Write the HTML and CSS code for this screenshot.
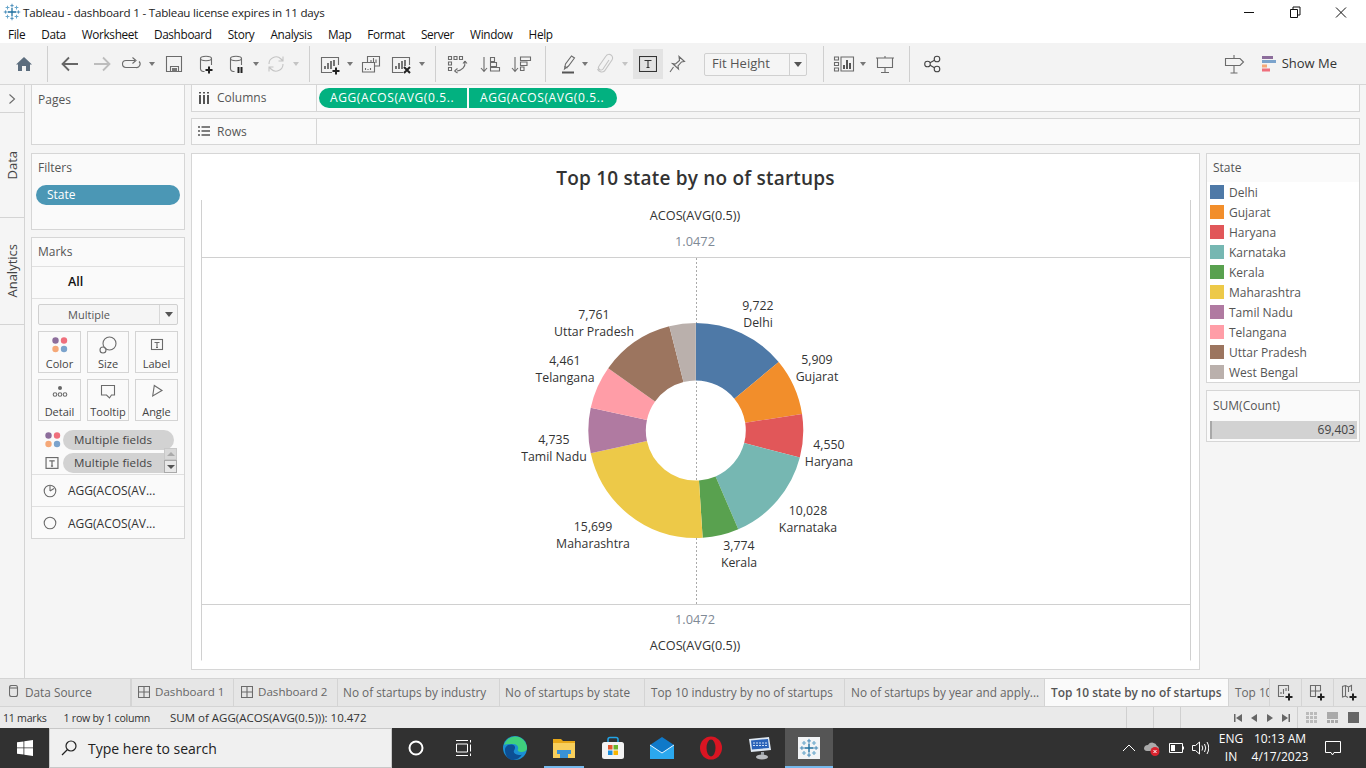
FILE: index.html
```html
<!DOCTYPE html>
<html lang="en">
<head>
<meta charset="utf-8">
<title>Tableau - dashboard 1</title>
<link rel="stylesheet" href="styles.css">
</head>
<body>
<svg class="defs" width="0" height="0" aria-hidden="true">
  <defs>
    <g id="snow">
      <path d="M12 6.500v11M6.500 12h11" class="sn1"/>
      <path d="M6 3.500v5M3.500 6h5M18 3.500v5M15.500 6h5M6 15.500v5M3.500 18h5M18 15.500v5M15.500 18h5" class="sn2"/>
      <path d="M12 1v5M9.800 3.500h4.400M12 18v5M9.800 20.500h4.400M1 12h5M3.500 9.800v4.400M18 12h5M20.500 9.800v4.400" class="sn3"/>
    </g>
    <g id="dots">
      <circle cx="4.500" cy="4.500" r="3.200" fill="#8c6d9b"/><circle cx="13" cy="4.500" r="3.200" fill="#ef6f7c"/>
      <circle cx="4.500" cy="13" r="3.200" fill="#f5a878"/><circle cx="13" cy="13" r="3.200" fill="#7ba3cc"/>
    </g>
    <g id="tbox"><rect x=".5" y=".5" width="11" height="10" class="ic"/><path d="M3.500 3.500h5M6 3.500v5M5 8.500h2" class="ic"/></g>
    <g id="cyl"><ellipse cx="12" cy="6.500" rx="5.500" ry="2.200" class="ic"/><path d="M6.500 6.500V17a3 3 0 0 0 3 2.500h1M17.500 6.500V13" class="ic"/></g>
    <g id="chartbox"><path d="M13 20.500H2.500v-15h17V13" class="ic"/><path d="M6 17v-3M9 17v-6M12 17V9M15 14V8" class="ic2"/></g>
  </defs>
</svg>
<div class="app">
  <header class="titlebar">
    <svg class="tb-logo" width="18" height="18" viewBox="0 0 24 24"><use href="#snow"/></svg>
    <span class="tb-title">Tableau - dashboard 1 - Tableau license expires in 11 days</span>
    <div class="winctl">
      <svg width="46" height="20" viewBox="0 0 46 20"><path d="M18 10.500h10" class="win"/></svg>
      <svg width="46" height="20" viewBox="0 0 46 20"><path d="M18.500 7.500h7v8h-7zM21 7.500v-2.500h7v8h-2.500" class="win"/></svg>
      <svg width="46" height="20" viewBox="0 0 46 20"><path d="M18 5.500l10 10M28 5.500l-10 10" class="win"/></svg>
    </div>
  </header>
  <nav class="menubar">
    <span>File</span><span>Data</span><span>Worksheet</span><span>Dashboard</span><span>Story</span><span>Analysis</span><span>Map</span><span>Format</span><span>Server</span><span>Window</span><span>Help</span>
  </nav>
  <div class="toolbar">
    <svg class="i ml12" viewBox="0 0 24 24"><path d="M12 5l8 7.500h-2V19h-4v-5h-4v5H6v-6.500H4z" fill="#5c6d7e"/></svg>
    <i class="sep ml11"></i>
    <svg class="i ml10" viewBox="0 0 24 24"><path d="M20 12H5M11 5.500L4.500 12l6.500 6.500" class="arrow"/></svg>
    <svg class="i ml8" viewBox="0 0 24 24"><path d="M4 12h15M13 5.500l6.500 6.500-6.500 6.500" class="arrow lite"/></svg>
    <svg class="i ml5" viewBox="0 0 24 24"><path d="M16 8.500H7a3.500 3.500 0 0 0 0 7h10a3.500 3.500 0 0 0 3-6M13.500 5.500L17 8.500l-3.500 3" class="ic"/></svg>
    <b class="caret ml4"></b>
    <svg class="i ml5" viewBox="0 0 24 24"><path d="M4.500 4.500h15v15h-15zM8.500 19.500v-5h8v5" class="ic"/><rect x="10" y="16" width="5" height="3.500" fill="#777"/></svg>
    <svg class="i ml8" viewBox="0 0 24 24"><use href="#cyl"/><path d="M15 14.500v7M11.500 18h7" class="blk"/></svg>
    <svg class="i ml6" viewBox="0 0 24 24"><use href="#cyl"/><path d="M14.500 15v6M17.500 15v6" class="blk"/></svg>
    <b class="caret ml3"></b>
    <svg class="i ml3" viewBox="0 0 24 24"><path d="M5 12a7 7 0 0 1 12-5l1.500 1.500M19 12a7 7 0 0 1-12 5l-1.500-1.500M19 4.500v4.500h-4.500M5 19.500V15h4.500" class="ic lite2"/></svg>
    <b class="caret lt ml3"></b>
    <i class="sep ml8"></i>
    <svg class="i ml9" viewBox="0 0 24 24"><use href="#chartbox"/><path d="M17 15.500v7M13.500 19h7" class="blk"/></svg>
    <b class="caret ml2"></b>
    <svg class="i ml4" viewBox="0 0 24 24"><path d="M8.500 10V4.500h12V14H16" class="ic"/><path d="M3.500 10.500h12V20h-12z" class="ic"/><path d="M12 11V8M14.500 11V6M17 11V7.500M6.500 18v-2M9 18v-1M11.500 18v-2" class="ic"/></svg>
    <svg class="i ml7" viewBox="0 0 24 24"><use href="#chartbox"/><path d="M14 15l6 6M20 15l-6 6" class="blk"/></svg>
    <b class="caret ml3"></b>
    <i class="sep ml8"></i>
    <svg class="i ml9" viewBox="0 0 24 24"><path d="M3.500 4.500h3v3h-3zM9 4.500h3v3H9zM14.500 4.500h3v3h-3zM3.500 10h3v3h-3zM3.500 15.500h3v3h-3z" class="ic"/><path d="M20 10c.5 5-3 8.500-8 9M9.500 19l3-2.500M9.500 19l3 2M20 9l-2 2.500M20 9l2 2.500" class="ic"/></svg>
    <svg class="i ml9" viewBox="0 0 24 24"><path d="M6 5v14M3 16l3 3.500L9 16" class="ic"/><path d="M12.500 5.500h4v4h-4zM12.500 10.500h6v4h-6zM12.500 15.500h9v3.500h-9z" class="ic"/></svg>
    <svg class="i ml7" viewBox="0 0 24 24"><path d="M6 5v14M3 16l3 3.500L9 16" class="ic"/><path d="M11.500 5h10v3.500h-10zM11.500 10h6.500v3.500h-6.500zM11.500 15h3.500v3.500h-3.500z" class="ic"/></svg>
    <i class="sep ml12"></i>
    <svg class="i ml10" viewBox="0 0 24 24"><path d="M8.500 17l1-5 6-8 3 2-6 8z" class="ic"/><path d="M8.500 14.500l3 1.500" class="ic"/><path d="M6 20.500h12" class="hl"/></svg>
    <b class="caret"></b>
    <svg class="i ml3" viewBox="0 0 24 24"><path d="M16 8l-6 9a2.500 2.500 0 0 1-4-3l7-10a3.500 3.500 0 0 1 6 4l-7.500 11a4.500 4.500 0 0 1-7-2" class="ic lite2"/></svg>
    <b class="caret lt ml3"></b>
    <div class="tbtn ml3"><svg width="18" height="16" viewBox="0 0 18 16"><rect x=".5" y=".5" width="17" height="15" class="dk"/><path d="M5.500 4.500h7M9 4.500v7M7.500 11.500h3" class="dk"/></svg></div>
    <svg class="i ml2" viewBox="0 0 24 24"><path d="M14 4.500l5.500 5-3 .5-3.500 4 .5 3-6-5.500 3 .5 4-3.500zM8.500 15l-3.500 5" class="ic"/></svg>
    <div class="fit ml15"><span class="fit-t">Fit Height</span><span class="fit-c"><b class="caret dk2"></b></span></div>
    <i class="sep ml16"></i>
    <svg class="i ml9" viewBox="0 0 24 24"><path d="M1.500 5h4v3h-4zM1.500 10.500h4v3h-4zM1.500 16h4v3h-4zM8 5h12.500v14H8z" class="ic"/><path d="M11 17v-4M14 17V8M17 17v-6" class="ic3"/></svg>
    <b class="caret ml1"></b>
    <svg class="i ml5" viewBox="0 0 24 24"><path d="M3 6h18M4.500 6v9.500h15V6M12 15.500V20M8 20.500h8M12 4v2" class="ic"/></svg>
    <i class="sep ml12"></i>
    <svg class="i ml10" viewBox="0 0 24 24"><circle cx="7.500" cy="12" r="2.800" class="icd"/><circle cx="17" cy="7" r="2.800" class="icd"/><circle cx="17" cy="17" r="2.800" class="icd"/><path d="M10 10.700l4.500-2.400M10 13.300l4.500 2.400" class="icd"/></svg>
    <div class="tb-right">
      <svg class="i" viewBox="0 0 24 24"><path d="M3.500 6.500H18l3.500 3.500-3.500 3.500H3.500zM12 3v3.500M12 13.500V21M8.500 21h7" class="ic"/></svg>
      <svg class="showme-ic" width="14" height="16" viewBox="0 0 14 16"><rect width="11" height="3" fill="#8c6d9b"/><rect y="4" width="14" height="3" fill="#7ba3cc"/><rect y="8.500" width="5" height="3" fill="#f5a878"/><rect y="12.500" width="8" height="3" fill="#ef6f7c"/></svg>
      <span class="showme">Show Me</span>
    </div>
  </div>

  <main class="main">
    <aside class="strip">
      <div class="st-chev"><svg width="8" height="12" viewBox="0 0 8 12"><path d="M1.500 1.500L6.500 6l-5 4.500" class="ic"/></svg></div>
      <div class="st-tab st-data"><span>Data</span></div>
      <div class="st-tab st-an"><span>Analytics</span></div>
    </aside>

    <section class="leftcol">
      <div class="panel pages"><div class="ph">Pages</div></div>
      <div class="panel filters"><div class="ph">Filters</div><div class="fpill">State</div></div>
      <div class="panel marks">
        <div class="ph mh">Marks</div>
        <div class="m-all">All</div>
        <div class="m-body">
          <div class="m-select"><span class="m-st">Multiple</span><span class="m-sc"><b class="caret dk2"></b></span></div>
          <div class="m-cards">
            <div class="card"><svg width="18" height="18" viewBox="0 0 18 18"><use href="#dots"/></svg><span>Color</span></div>
            <div class="card"><svg width="18" height="18" viewBox="0 0 18 18"><circle cx="10.500" cy="7.500" r="6.500" class="ic"/><circle cx="4" cy="14" r="3" class="ic"/></svg><span>Size</span></div>
            <div class="card"><svg width="18" height="18" viewBox="-3 -3 18 18"><use href="#tbox"/></svg><span>Label</span></div>
            <div class="card"><svg width="18" height="18" viewBox="0 0 18 18"><circle cx="9" cy="4" r="2" fill="#666"/><circle cx="4" cy="10.500" r="1.800" class="ic"/><circle cx="9" cy="10.500" r="1.800" class="ic"/><circle cx="14" cy="10.500" r="1.800" class="ic"/></svg><span>Detail</span></div>
            <div class="card"><svg width="18" height="18" viewBox="0 0 18 18"><path d="M2.500 1.500h13v9.500h-3l-2 3-3-3h-5z" class="ic"/></svg><span>Tooltip</span></div>
            <div class="card"><svg width="18" height="18" viewBox="0 0 18 18"><path d="M6.300 1.500L14 6.500 4.700 12z" class="ic"/></svg><span>Angle</span></div>
          </div>
          <div class="m-fields">
            <div class="m-field"><svg width="18" height="18" viewBox="0 0 18 18"><use href="#dots"/></svg><span class="gpill">Multiple fields</span></div>
            <div class="m-field"><svg width="14" height="13" viewBox="0 0 12 12"><use href="#tbox"/></svg><span class="gpill gp2">Multiple fields</span></div>
            <div class="m-scroll"><span class="sb"><b class="up"></b></span><span class="sb sb2"><b class="down"></b></span></div>
          </div>
        </div>
        <div class="m-row"><svg width="14" height="14" viewBox="0 0 14 14"><circle cx="7" cy="7" r="5.800" class="ic"/><path d="M7 7V1.200M7 7l4-2.500" class="ic"/></svg><span>AGG(ACOS(AV...</span></div>
        <div class="m-row"><svg width="14" height="14" viewBox="0 0 14 14"><circle cx="7" cy="7" r="5.800" class="ic"/></svg><span>AGG(ACOS(AV...</span></div>
      </div>
    </section>

    <section class="centercol">
      <div class="shelf sh-col">
        <div class="sh-label"><svg width="12" height="12" viewBox="0 0 12 12"><path d="M2 3v9M6 3v9M10 3v9" class="bars"/><path d="M2 0v1.500M6 0v1.500M10 0v1.500" class="bars"/></svg><span>Columns</span></div>
        <div class="sh-pills"><span class="gr gr1">AGG(ACOS(AVG(0.5..</span><span class="gr gr2">AGG(ACOS(AVG(0.5..</span></div>
      </div>
      <div class="shelf sh-row">
        <div class="sh-label"><svg width="12" height="12" viewBox="0 0 12 12"><path d="M0 2h2M3.500 2H12M0 6h2M3.500 6H12M0 10h2M3.500 10H12" class="bars2"/></svg><span>Rows</span></div>
      </div>
      <div class="content">
        <div class="view">
          <h1 class="vtitle">Top 10 state by no of startups</h1>
          <svg class="plot" width="1009" height="470" viewBox="191 200 1009 470">
            <path d="M201.500 200V660.500M1190.500 200V660.500" class="axis"/>
            <path d="M201 257.500H1191M201 604.500H1191" class="axis"/>
            <path d="M696.500 258V604" class="zero"/>
            <text x="695" y="220" class="t-axis">ACOS(AVG(0.5))</text>
            <text x="695" y="246" class="t-tick">1.0472</text>
            <text x="695" y="624" class="t-tick">1.0472</text>
            <text x="695" y="650" class="t-axis">ACOS(AVG(0.5))</text>
            <g transform="rotate(-90 695.800 430.500)" fill="none" stroke-width="57.500">
              <circle cx="695.800" cy="430.500" r="78.750" pathLength="69403" stroke="#4e79a7" stroke-dasharray="9722 69403"/>
              <circle cx="695.800" cy="430.500" r="78.750" pathLength="69403" stroke="#f28e2b" stroke-dasharray="5909 69403" stroke-dashoffset="-9722"/>
              <circle cx="695.800" cy="430.500" r="78.750" pathLength="69403" stroke="#e15759" stroke-dasharray="4550 69403" stroke-dashoffset="-15631"/>
              <circle cx="695.800" cy="430.500" r="78.750" pathLength="69403" stroke="#76b7b2" stroke-dasharray="10028 69403" stroke-dashoffset="-20181"/>
              <circle cx="695.800" cy="430.500" r="78.750" pathLength="69403" stroke="#59a14f" stroke-dasharray="3774 69403" stroke-dashoffset="-30209"/>
              <circle cx="695.800" cy="430.500" r="78.750" pathLength="69403" stroke="#edc948" stroke-dasharray="15699 69403" stroke-dashoffset="-33983"/>
              <circle cx="695.800" cy="430.500" r="78.750" pathLength="69403" stroke="#b07aa1" stroke-dasharray="4735 69403" stroke-dashoffset="-49682"/>
              <circle cx="695.800" cy="430.500" r="78.750" pathLength="69403" stroke="#ff9da7" stroke-dasharray="4461 69403" stroke-dashoffset="-54417"/>
              <circle cx="695.800" cy="430.500" r="78.750" pathLength="69403" stroke="#9c755f" stroke-dasharray="7761 69403" stroke-dashoffset="-58878"/>
              <circle cx="695.800" cy="430.500" r="78.750" pathLength="69403" stroke="#bab0ac" stroke-dasharray="2764 69403" stroke-dashoffset="-66639"/>
            </g>
            <text x="758" y="310" class="t-l">9,722</text><text x="758" y="327" class="t-l">Delhi</text>
            <text x="817" y="364" class="t-l">5,909</text><text x="817" y="381" class="t-l">Gujarat</text>
            <text x="829" y="449" class="t-l">4,550</text><text x="829" y="466" class="t-l">Haryana</text>
            <text x="808" y="515" class="t-l">10,028</text><text x="808" y="532" class="t-l">Karnataka</text>
            <text x="739" y="550" class="t-l">3,774</text><text x="739" y="567" class="t-l">Kerala</text>
            <text x="593" y="531" class="t-l">15,699</text><text x="593" y="548" class="t-l">Maharashtra</text>
            <text x="554" y="444" class="t-l">4,735</text><text x="554" y="461" class="t-l">Tamil Nadu</text>
            <text x="565" y="365" class="t-l">4,461</text><text x="565" y="382" class="t-l">Telangana</text>
            <text x="594" y="319" class="t-l">7,761</text><text x="594" y="336" class="t-l">Uttar Pradesh</text>
          </svg>
        </div>
        <aside class="rightcol">
          <div class="panel legend">
            <div class="ph lh">State</div>
            <ul class="lg-list">
              <li><i class="sw c1"></i>Delhi</li>
              <li><i class="sw c2"></i>Gujarat</li>
              <li><i class="sw c3"></i>Haryana</li>
              <li><i class="sw c4"></i>Karnataka</li>
              <li><i class="sw c5"></i>Kerala</li>
              <li><i class="sw c6"></i>Maharashtra</li>
              <li><i class="sw c7"></i>Tamil Nadu</li>
              <li><i class="sw c8"></i>Telangana</li>
              <li><i class="sw c9"></i>Uttar Pradesh</li>
              <li><i class="sw c10"></i>West Bengal</li>
            </ul>
          </div>
          <div class="panel sumcount">
            <div class="ph sh">SUM(Count)</div>
            <div class="sumbar">69,403</div>
          </div>
        </aside>
      </div>
    </section>
  </main>

  <div class="tabs">
    <div class="tab t-ds"><svg width="10" height="13" viewBox="0 0 10 13"><rect x=".5" y=".5" width="8" height="11" rx="2" class="ic"/><path d="M.5 3h8" class="ic"/></svg>Data Source</div>
    <div class="tab t-d1"><svg width="12" height="12" viewBox="0 0 12 12"><path d="M.5.500h11v11H.500zM6 .500v11M.500 6h11" class="ic"/></svg>Dashboard 1</div>
    <div class="tab t-d2"><svg width="12" height="12" viewBox="0 0 12 12"><path d="M.5.500h11v11H.500zM6 .500v11M.500 6h11" class="ic"/></svg>Dashboard 2</div>
    <div class="tab t-a">No of startups by industry</div>
    <div class="tab t-b">No of startups by state</div>
    <div class="tab t-c">Top 10 industry by no of startups</div>
    <div class="tab t-e">No of startups by year and apply...</div>
    <div class="tab t-active">Top 10 state by no of startups</div>
    <div class="tab t-clip">Top 10</div>
    <div class="tab t-add"><svg width="18" height="18" viewBox="0 0 18 18"><path d="M7 12.500H1.500v-11h10V7M4 10V8M6.500 10V5M9 7V4" class="ic"/><path d="M12 9.500v7M8.500 13h7" class="blk"/></svg></div>
    <div class="tab t-add"><svg width="18" height="18" viewBox="0 0 18 18"><path d="M7 12.500H1.500v-11h10V7M1.500 7h10M6.500 1.500v11" class="ic"/><path d="M12 9.500v7M8.500 13h7" class="blk"/></svg></div>
    <div class="tab t-add"><svg width="18" height="18" viewBox="0 0 18 18"><path d="M7 13.500l-2.500-1.500-3 1V2.500l3-1 3 1.500 3-1.500V7M4.500 1.500V12M7.500 3v5" class="ic"/><path d="M12 9.500v7M8.500 13h7" class="blk"/></svg></div>
  </div>

  <div class="status">
    <span class="s1">11 marks</span><span class="s2">1 row by 1 column</span><span class="s3">SUM of AGG(ACOS(AVG(0.5))): 10.472</span>
    <div class="s-cells"><i></i><i></i><i></i></div>
    <div class="s-nav">
      <svg width="8" height="8" viewBox="0 0 8 8"><path d="M0 0h1.500v8H0zM8 0v8L2 4z" fill="#666"/></svg>
      <svg width="8" height="8" viewBox="0 0 8 8"><path d="M7 0v8L1 4z" fill="#666"/></svg>
      <svg width="8" height="8" viewBox="0 0 8 8"><path d="M1 0v8l6-4z" fill="#666"/></svg>
      <svg width="8" height="8" viewBox="0 0 8 8"><path d="M8 0H6.500v8H8zM0 0v8l6-4z" fill="#666"/></svg>
    </div>
    <div class="s-view">
      <svg width="11" height="11" viewBox="0 0 11 11"><path d="M0 0h3v3H0zM4 0h3v3H4zM8 0h3v3H8zM0 4h3v3H0zM4 4h3v3H4zM8 4h3v3H8zM0 8h3v3H0zM4 8h3v3H4zM8 8h3v3H8z" fill="#bbb"/></svg>
      <svg width="11" height="11" viewBox="0 0 11 11"><path d="M0 0h11v7H0zM0 8h3v3H0zM4 8h3v3H4zM8 8h3v3H8z" fill="#aaa"/></svg>
      <svg width="11" height="11" viewBox="0 0 11 11"><path d="M0 0h11v11H0z" fill="#666"/></svg>
    </div>
  </div>

  <footer class="taskbar">
    <div class="start"><svg width="16" height="16" viewBox="0 0 16 16"><path d="M0 2.300l6.500-.9V7.500H0zM7.300 1.300L16 0v7.500H7.300zM0 8.300h6.500v6.300L0 13.700zM7.300 8.300H16V16l-8.700-1.200z" fill="#fff"/></svg></div>
    <div class="search"><svg width="16" height="16" viewBox="0 0 16 16"><circle cx="10" cy="6" r="5" class="srch"/><path d="M6.500 9.500L1 15" class="srch"/></svg><span>Type here to search</span></div>
    <div class="tk"><svg width="16" height="16" viewBox="0 0 16 16"><circle cx="8" cy="8" r="6.500" fill="none" stroke="#fff" stroke-width="2"/></svg></div>
    <div class="tk"><svg width="18" height="16" viewBox="0 0 18 16"><path d="M1 .500h12M1 15.500h12M1.500 4h11v8h-11z" class="wl"/><path d="M15.500 0v2.500M15.500 4.500v7M15.500 13.500V16" class="wl"/></svg></div>
    <div class="tk ml-tk"><svg width="24" height="24" viewBox="0 0 24 24"><circle cx="12" cy="12" r="12" fill="#1b8fd4"/><path d="M1 9C3 2 10-1 16 1c5 2 8 7 8 11 0 3-3 4-6 4-2 0-4-1-3-3 1-2-1-5-5-5-4 0-7 0-9 1z" fill="#3fd07d"/><path d="M2 14c0-4 4-6 7-5.500 3 .5 4 3 2 6-1 2 1 4 5 4.500 1 .2 2 0 3-.5-2 3-5 5.500-9 5.500-5 0-8-5-8-10z" fill="#0c4f94"/></svg></div>
    <div class="tk on"><svg width="22" height="20" viewBox="0 0 22 20"><path d="M0 1h8l2 2h12v5H0z" fill="#e8a818"/><path d="M0 5h22v15H0z" fill="#f8cf5c"/><path d="M4 12h14v4H15v4H7v-4H4z" fill="#3a92d6"/></svg></div>
    <div class="tk"><svg width="24" height="24" viewBox="0 0 24 24"><path d="M7 7V3.500a2 2 0 0 1 2-2h6a2 2 0 0 1 2 2V7" fill="none" stroke="#22a5e8" stroke-width="1.500"/><rect x="1" y="6" width="22" height="17" rx="2.500" fill="#f3f3f3"/><rect x="7" y="9" width="4.500" height="4.500" fill="#e4572e"/><rect x="12.500" y="9" width="4.500" height="4.500" fill="#6bb42c"/><rect x="7" y="14.500" width="4.500" height="4.500" fill="#1a8fe0"/><rect x="12.500" y="14.500" width="4.500" height="4.500" fill="#f7b500"/></svg></div>
    <div class="tk"><svg width="24" height="24" viewBox="0 0 24 24"><path d="M0 9L12 1l12 8v14H0z" fill="#0f79c9"/><path d="M0 9l12 8 12-8v14H0z" fill="#2ba8ee"/><path d="M0 9l12 8 12-8" fill="none" stroke="#eaf6ff" stroke-width="1"/></svg></div>
    <div class="tk"><svg width="24" height="24" viewBox="0 0 24 24"><ellipse cx="12" cy="12" rx="11" ry="11.500" fill="#d91522"/><ellipse cx="12" cy="12" rx="4.500" ry="8.500" fill="#2f2f2f"/></svg></div>
    <div class="tk"><svg width="24" height="24" viewBox="0 0 24 24"><path d="M1 3l20-2 2 13-20 2z" fill="#dfe8f2"/><path d="M3 4.500l17-1.500 1 9-17 1.500z" fill="#2a62b8"/><path d="M5 7h14M5 9.500h14" stroke="#cfe0f5" stroke-dasharray="2 1"/><ellipse cx="14" cy="21" rx="6" ry="2.500" fill="#b9bcc0"/><path d="M13 16h3v3h-3z" fill="#9aa0a6"/></svg></div>
    <div class="tk tk-tb"><svg width="22" height="22" viewBox="0 0 22 22"><rect width="22" height="22" fill="#f2f4f6"/><svg x="1" y="1" width="20" height="20" viewBox="0 0 24 24"><use href="#snow"/></svg></svg></div>
    <div class="tray">
      <svg width="14" height="8" viewBox="0 0 14 8"><path d="M1 7l6-6 6 6" class="wl"/></svg>
      <svg class="t-cloud" width="18" height="16" viewBox="0 0 18 16"><path d="M1 9a4 4 0 0 1 4-4 5 5 0 0 1 9 1 3 3 0 0 1 1 5H4a3 3 0 0 1-3-2z" fill="#aaa"/><circle cx="12" cy="11.500" r="4.500" fill="#d9232e"/><path d="M10.500 10l3 3M13.500 10l-3 3" stroke="#fff"/></svg>
      <svg class="t-bat" width="16" height="10" viewBox="0 0 16 10"><path d="M.5.500h13v9H.500z" class="wl"/><rect x="2" y="2" width="4" height="6" fill="#fff"/><path d="M14.500 3.500v3" class="wl"/></svg>
      <svg class="t-vol" width="17" height="14" viewBox="0 0 17 14"><path d="M.5 4.500h3l4-3.500v12l-4-3.500h-3zM10 4.500q1.500 2.500 0 5M12.500 3q2.500 4 0 8M15 1q3.500 6 0 12" class="wl"/></svg>
      <div class="t-lang"><span>ENG</span><span>IN</span></div>
      <div class="t-clock"><span>10:13 AM</span><span>4/17/2023</span></div>
      <svg class="t-note" width="16" height="15" viewBox="0 0 16 15"><path d="M.5.500h15v11H9l-1.500 2.500L6 11.500H.5z" class="wl"/></svg>
    </div>
  </footer>
</div>
</body>
</html>
```
FILE: styles.css
```css
* { box-sizing: border-box; }
html, body { margin: 0; padding: 0; }
body { font-family: "Open Sans", "Noto Sans", sans-serif; font-size: 12px; color: #333; background: #fff; overflow: hidden; }
.defs { position: absolute; }
.app { width: 1366px; height: 768px; display: flex; flex-direction: column; overflow: hidden; }
i, b { display: block; font-style: normal; }

.sn1 { stroke: #1f6f9f; stroke-width: 1.7; fill: none; }
.sn2 { stroke: #6aa8cc; stroke-width: 1.4; fill: none; }
.sn3 { stroke: #3f86b5; stroke-width: 1.2; fill: none; }
.ic { fill: none; stroke: #6b6b6b; stroke-width: 1.1; }
.icd { fill: none; stroke: #444; stroke-width: 1.1; }
.ic2 { fill: none; stroke: #555; stroke-width: 1.6; }
.ic3 { fill: none; stroke: #555; stroke-width: 2; }
.lite2 { stroke: #c4c4c4; }
.blk { fill: none; stroke: #222; stroke-width: 2; }
.arrow { fill: none; stroke: #666; stroke-width: 1.8; }
.arrow.lite { stroke: #bdbdbd; }
.hl { stroke: #555; stroke-width: 2; fill: none; }
.dk { fill: none; stroke: #333; stroke-width: 1.1; }
.win { fill: none; stroke: #111; stroke-width: 1; }

.titlebar { height: 24px; display: flex; align-items: center; background: #fff; padding-left: 3px; }
.tb-logo { flex: none; }
.tb-title { margin-left: 2px; font-size: 11.6px; letter-spacing: -.2px; color: #222; }
.winctl { margin-left: auto; display: flex; gap: 0; margin-right: 2px; }

.menubar { height: 19px; display: flex; padding-left: 8px; gap: 16px; align-items: center; font-size: 11.8px; letter-spacing: -.35px; color: #111; background: #fff; }

.toolbar { height: 41px; flex: none; background: #f3f3f3; display: flex; align-items: center; padding-top: 1px; }
.i { width: 24px; height: 24px; flex: none; }
.sep { width: 1px; height: 36px; background: #cfcfcf; flex: none; }
.caret { width: 0; height: 0; border-left: 3px solid transparent; border-right: 3px solid transparent; border-top: 4px solid #777; margin-right: 2px; flex: none; box-sizing: content-box; }
.toolbar > .caret { margin-left: 2px; }
.toolbar > .caret.ml1 { margin-left: 3px; }
.toolbar > .caret.ml2 { margin-left: 4px; }
.toolbar > .caret.ml3 { margin-left: 5px; }
.toolbar > .caret.ml4 { margin-left: 6px; }
.caret.lt { border-top-color: #c4c4c4; }
.caret.dk2 { border-top-color: #555; border-left-width: 4px; border-right-width: 4px; border-top-width: 5px; margin: 0; }
.ml1 { margin-left: 1px; } .ml2 { margin-left: 2px; } .ml3 { margin-left: 3px; } .ml4 { margin-left: 4px; }
.ml5 { margin-left: 5px; } .ml6 { margin-left: 6px; } .ml7 { margin-left: 7px; } .ml8 { margin-left: 8px; }
.ml9 { margin-left: 9px; } .ml10 { margin-left: 10px; } .ml11 { margin-left: 11px; } .ml12 { margin-left: 12px; }
.ml15 { margin-left: 15px; } .ml16 { margin-left: 16px; }
.tbtn { width: 30px; height: 30px; background: #e3e3e3; display: flex; align-items: center; justify-content: center; flex: none; }
.fit { width: 103px; height: 23px; flex: none; border: 1px solid #d0d0d0; border-radius: 2px; background: #f5f5f5; display: flex; align-items: center; }
.fit-t { width: 84px; padding: 0 0 2px 7px; font-size: 13px; color: #555; white-space: nowrap; }
.fit-c { flex: 1; height: 100%; border-left: 1px solid #d0d0d0; display: flex; align-items: center; justify-content: center; }
.tb-right { margin-left: auto; display: flex; align-items: center; padding-right: 29px; }
.showme-ic { margin-left: 16px; }
.showme { margin-left: 6px; padding-bottom: 2px; font-size: 13px; color: #333; }

.main { flex: 1; min-height: 0; display: flex; background: #f5f5f5; border-top: 1px solid #d6d6d6; }
.strip { width: 25px; flex: none; border-right: 1px solid #d4d4d4; background: #f5f5f5; display: flex; flex-direction: column; }
.st-chev { height: 28px; border-bottom: 1px solid #d4d4d4; display: flex; align-items: center; justify-content: center; }
.st-tab { display: flex; align-items: center; justify-content: center; border-bottom: 1px solid #d4d4d4; font-size: 13px; color: #444; }
.st-tab span { writing-mode: vertical-rl; transform: rotate(180deg); }
.st-data { height: 105px; }
.st-an { height: 107px; }

.panel { background: #fafafa; border: 1px solid #d6d6d6; }
.leftcol { width: 154px; margin-left: 6px; flex: none; display: flex; flex-direction: column; }
.ph { color: #555; font-size: 12px; padding-left: 6px; }
.pages { height: 60px; border-top: 0; }
.pages .ph { padding-top: 6px; }
.filters { height: 77px; margin-top: 8px; }
.filters .ph { padding-top: 5px; height: 31px; }
.fpill { margin: 0 4px; height: 20px; border-radius: 10px; background: #4b97b5; color: #fff; padding-left: 11px; font-size: 12px; line-height: 19px; }
.marks { height: 302px; margin-top: 7px; }
.mh { height: 29px; padding-top: 5px; border-bottom: 1px solid #e0e0e0; }
.m-all { height: 32px; line-height: 29px; border-bottom: 1px solid #e0e0e0; font-weight: 600; font-size: 12.5px; color: #111; padding-left: 36px; }
.m-body { height: 176px; padding: 5px 6px 0; border-bottom: 1px solid #e0e0e0; }
.m-select { height: 21px; border: 1px solid #d0d0d0; border-radius: 2px; background: #f5f5f5; display: flex; align-items: center; font-size: 11px; color: #555; }
.m-st { width: 120px; text-align: center; padding-right: 20px; }
.m-sc { flex: 1; height: 100%; border-left: 1px solid #d8d8d8; display: flex; align-items: center; justify-content: center; }
.m-cards { display: grid; grid-template-columns: 43px 42px 43px; column-gap: 6px; row-gap: 6px; margin-top: 6px; }
.card { height: 42px; border: 1px solid #d4d4d4; display: flex; flex-direction: column; align-items: center; justify-content: flex-end; font-size: 11px; color: #444; padding-bottom: 1px; line-height: 15px; }
.card svg { margin-bottom: 2px; }
.m-fields { position: relative; margin-top: 9px; height: 43px; overflow: hidden; }
.m-field { display: flex; align-items: center; height: 20px; margin-bottom: 3px; }
.m-field svg { margin-left: 6px; width: 18px; flex: none; }
.m-field svg[width="14"] { width: 14px; margin-left: 7px; margin-right: 3px; }
.gpill { margin-left: 1px; width: 111px; height: 20px; border-radius: 10px; background: #d2d2d2; font-size: 11.6px; font-weight: 500; letter-spacing: .15px; color: #444; padding-left: 11px; line-height: 19px; white-space: nowrap; }
.m-scroll { position: absolute; right: 1px; top: 18px; width: 13px; height: 25px; display: flex; flex-direction: column; }
.sb { height: 12px; background: #d8d8d8; border: 1px solid #c8c8c8; display: flex; align-items: center; justify-content: center; }
.sb2 { height: 13px; background: #e8e8e8; border-color: #aaa; }
.up { width: 0; height: 0; border-left: 4px solid transparent; border-right: 4px solid transparent; border-bottom: 4px solid #aaa; }
.down { width: 0; height: 0; border-left: 4px solid transparent; border-right: 4px solid transparent; border-top: 4px solid #555; }
.m-row { height: 32px; display: flex; align-items: center; padding-left: 11px; font-size: 12px; color: #333; border-bottom: 1px solid #e0e0e0; gap: 11px; }
.m-row:last-child { border-bottom: 0; }

.centercol { width: 1169px; margin-left: 6px; flex: none; display: flex; flex-direction: column; }
.shelf { background: #fafafa; border: 1px solid #d6d6d6; display: flex; }
.sh-col { height: 27px; border-top: 0; }
.sh-row { height: 27px; margin-top: 6px; }
.sh-label { width: 125px; flex: none; border-right: 1px solid #d6d6d6; display: flex; align-items: center; gap: 7px; padding-left: 6px; color: #555; font-size: 12px; padding-bottom: 1px; }
.bars { fill: none; stroke: #555; stroke-width: 2; }
.bars2 { fill: none; stroke: #555; stroke-width: 1.6; }
.sh-pills { display: flex; gap: 2px; padding: 3px 0 0 2px; }
.gr { width: 148px; height: 20px; background: #02b180; color: #fff; font-size: 12px; letter-spacing: .6px; line-height: 19px; padding-left: 11px; white-space: nowrap; }
.gr1 { border-radius: 10px 0 0 10px; }
.gr2 { border-radius: 0 10px 10px 0; }
.content { display: flex; margin-top: 8px; }
.view { width: 1009px; height: 517px; background: #fff; border: 1px solid #d6d6d6; display: flex; flex-direction: column; align-items: center; }
.vtitle { margin: 0; height: 46px; flex: none; line-height: 49px; font-size: 19px; letter-spacing: .2px; font-weight: 600; color: #333; }
.plot { flex: none; margin: 0 -1px; overflow: visible; }
.axis { fill: none; stroke: #d0d0d0; stroke-width: 1; }
.zero { fill: none; stroke: #aaa; stroke-width: 1; stroke-dasharray: 2 2; }
.plot text { text-anchor: middle; font-size: 12.3px; fill: #333; }
.plot .t-tick { fill: #7f8a96; font-size: 12.8px; }
.plot .t-axis { font-size: 12.7px; }
.rightcol { width: 154px; margin-left: 6px; flex: none; display: flex; flex-direction: column; }
.legend { height: 230px; }
.lh { height: 28px; line-height: 28px; }
.lg-list { list-style: none; margin: 0; padding: 0; background: #fff; height: 200px; }
.lg-list li { height: 20px; display: flex; align-items: center; gap: 5px; padding-left: 3px; font-size: 12px; color: #555; }
.sw { width: 14px; height: 14px; flex: none; }
.c1 { background: #4e79a7; } .c2 { background: #f28e2b; } .c3 { background: #e15759; } .c4 { background: #76b7b2; } .c5 { background: #59a14f; }
.c6 { background: #edc948; } .c7 { background: #b07aa1; } .c8 { background: #ff9da7; } .c9 { background: #9c755f; } .c10 { background: #bab0ac; }
.sumcount { height: 52px; margin-top: 7px; }
.sh { height: 30px; line-height: 29px; }
.sumbar { margin: 0 2px 0 3px; height: 18px; background: #d2d2d2; border-left: 2px solid #a8a8a8; text-align: right; padding-right: 2px; line-height: 18px; color: #444; font-size: 12px; }

.tabs { height: 29px; flex: none; display: flex; background: #e6e6e6; border-top: 1px solid #d4d4d4; border-bottom: 1px solid #d4d4d4; }
.tab { display: flex; align-items: center; padding-left: 5px; padding-bottom: 2px; font-size: 11.8px; color: #666; border-right: 1px solid #d4d4d4; white-space: nowrap; overflow: hidden; flex: none; gap: 6px; }
.t-ds { width: 132px; padding-left: 9px; border-right-width: 2px; }
.t-d1 { width: 102px; padding-left: 6px; gap: 5px; font-size: 11.6px; }
.t-d2 { width: 104px; padding-left: 7px; gap: 5px; font-size: 11.6px; }
.t-a { width: 162px; }
.t-b { width: 145px; }
.t-c { width: 200px; padding-left: 6px; }
.t-e { width: 200px; padding-left: 6px; }
.t-active { width: 184px; background: #fafafa; font-weight: 600; font-size: 11.9px; color: #555; padding-left: 6px; }
.t-clip { width: 41px; padding-left: 6px; overflow: hidden; }
.t-add { width: 32px; padding: 0; justify-content: center; }
.t-add:last-child { border-right: 0; }

.status { height: 21px; flex: none; display: flex; align-items: center; background: #eaeaea; font-size: 10.6px; color: #333; padding-left: 3px; }
.s1, .s2 { letter-spacing: -.25px; }
.s2 { margin-left: 17px; }
.s3 { margin-left: 20px; font-size: 11.5px; }
.s-cells { display: flex; margin-left: auto; height: 100%; }
.s-cells i { width: 27px; border-left: 1px solid #d0d0d0; }
.s-cells i:last-child { width: 1px; margin-right: 53px; }
.s-nav { display: flex; gap: 8px; align-items: center; height: 100%; padding-right: 7px; border-right: 1px solid #d0d0d0; }
.s-view { display: flex; gap: 10px; align-items: center; width: 68px; justify-content: flex-end; padding-right: 7px; }

.taskbar { height: 40px; flex: none; display: flex; background: #313131; color: #fff; }
.start { width: 49px; display: flex; align-items: center; justify-content: center; flex: none; }
.search { width: 343px; flex: none; background: #f0f0f0; border: 1px solid #c8c8c8; display: flex; align-items: center; padding-left: 11px; gap: 11px; color: #222; font-size: 14px; }
.srch { fill: none; stroke: #222; stroke-width: 1.2; }
.tk { width: 48px; flex: none; display: flex; align-items: center; justify-content: center; margin-right: 1px; position: relative; }
.search + .tk { margin-right: 0; }
.search + .tk + .tk { margin-right: 0; }
.ml-tk { margin-left: 3px; }
.wl { fill: none; stroke: #fff; stroke-width: 1; }
.tk.on::after, .tk-tb::after { content: ""; position: absolute; left: 4px; right: 4px; bottom: 0; height: 2px; background: #76b9ed; }
.tk-tb { background: #555; }
.tk-tb::after { left: 0; right: 0; }
.tray { margin-left: auto; display: flex; align-items: center; padding-right: 25px; }
.t-cloud { margin-left: 7px; }
.t-bat { margin-left: 8px; }
.t-vol { margin-left: 7px; }
.t-lang { margin-left: 7px; width: 30px; display: flex; flex-direction: column; align-items: center; font-size: 12px; line-height: 18px; }
.t-clock { margin-left: 2px; width: 64px; display: flex; flex-direction: column; align-items: center; font-size: 12px; line-height: 18px; }
.t-note { margin-left: 13px; }
```
